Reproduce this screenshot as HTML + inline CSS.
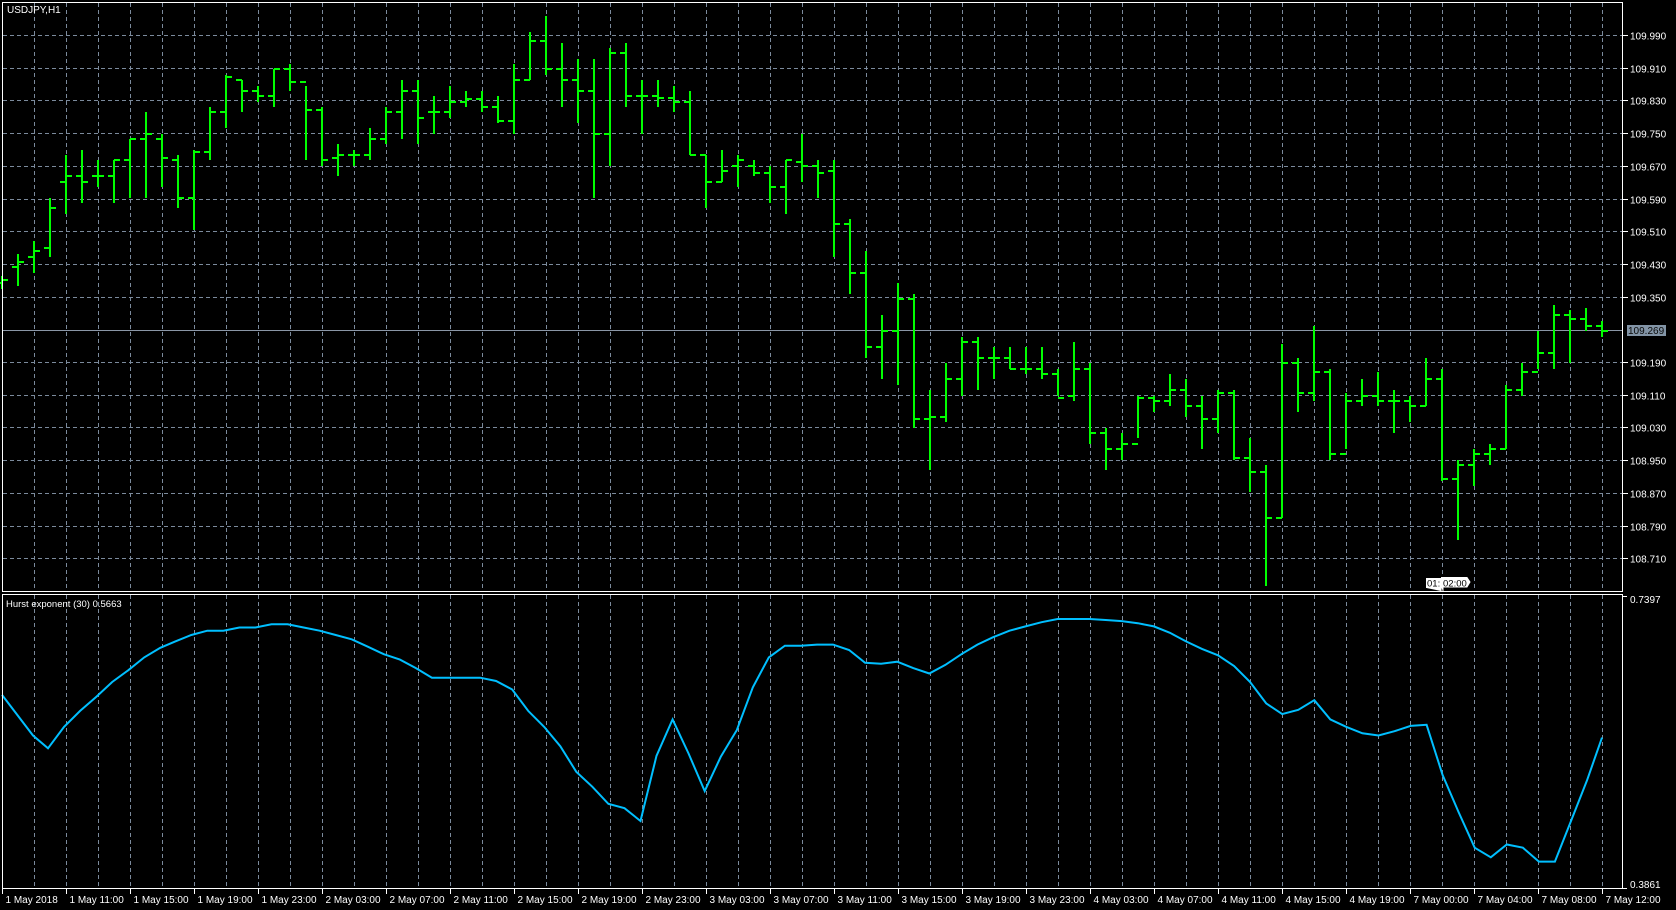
<!DOCTYPE html>
<html><head><meta charset="utf-8"><style>
html,body{margin:0;padding:0;background:#000;width:1676px;height:910px;overflow:hidden}
svg{display:block}
text{font-family:"Liberation Sans",sans-serif;font-size:10px;fill:#fff}
</style></head><body>
<svg id="s" width="1676" height="910" xmlns="http://www.w3.org/2000/svg">
<g id="grid" stroke="#7b8a9c" stroke-width="1" stroke-dasharray="4,3"></g>
<line x1="2" y1="330.5" x2="1623" y2="330.5" stroke="#8a96a6" stroke-width="1"/>
<g id="bars" stroke="#00ff00" stroke-width="2"></g>
<polyline id="hl" fill="none" stroke="#00bfff" stroke-width="2"/>
<rect x="2.5" y="2.5" width="1620" height="589" fill="none" stroke="#fff"/>
<rect x="2.5" y="594.5" width="1620" height="294" fill="none" stroke="#fff"/>
<text x="7" y="13">USDJPY,H1</text>
<text x="6" y="607" style="font-size:9.5px">Hurst exponent (30) 0.5663</text>
<g id="ax"></g>
<rect x="1627" y="325" width="39" height="11" fill="#8294a6"/>
<text x="1628" y="334" style="fill:#0a0a0a">109.269</text>
<path d="M1426.5 588 V578.5 H1441 V591" fill="#fff" stroke="#fff"/>
<path d="M1441.5 588 V577.5 H1467 L1470 582 L1467 587 H1443 V591" fill="#fff" stroke="#fff"/>
<text x="1427" y="586.5" style="fill:#000;font-size:9.5px">01:</text>
<text x="1443" y="586.5" style="fill:#000;font-size:9.5px">02:00</text>
<text x="1630" y="603">0.7397</text>
<line x1="1623" y1="596.5" x2="1627" y2="596.5" stroke="#fff"/>
<text x="1630" y="888">0.3861</text>
<line x1="1623" y1="888.5" x2="1627" y2="888.5" stroke="#fff"/>
</svg>
<script>
var NS="http://www.w3.org/2000/svg",g=document.getElementById('grid'),ax=document.getElementById('ax'),bars=document.getElementById('bars');
function el(p,t,a,txt){var e=document.createElementNS(NS,t);for(var k in a)e.setAttribute(k,a[k]);if(txt)e.textContent=txt;p.appendChild(e);return e;}
for(var x=34;x<1623;x+=32){el(g,'line',{x1:x+.5,y1:3,x2:x+.5,y2:591});el(g,'line',{x1:x+.5,y1:595,x2:x+.5,y2:888});}
var pr=['109.990','109.910','109.830','109.750','109.670','109.590','109.510','109.430','109.350','109.270','109.190','109.110','109.030','108.950','108.870','108.790','108.710'];
for(var i=0;i<pr.length;i++){var y=Math.round(35+i*32.7)+.5;if(i!=9){el(g,'line',{x1:3,y1:y,x2:1622,y2:y});}
 if(i==9)continue;el(ax,'line',{x1:1623,y1:y,x2:1628,y2:y,stroke:'#fff'});el(ax,'text',{x:1630,y:y+4},pr[i]);}
var tl=['1 May 2018','1 May 11:00','1 May 15:00','1 May 19:00','1 May 23:00','2 May 03:00','2 May 07:00','2 May 11:00','2 May 15:00','2 May 19:00','2 May 23:00','3 May 03:00','3 May 07:00','3 May 11:00','3 May 15:00','3 May 19:00','3 May 23:00','4 May 03:00','4 May 07:00','4 May 11:00','4 May 15:00','4 May 19:00','7 May 00:00','7 May 04:00','7 May 08:00','7 May 12:00'];
for(var i=0;i<tl.length;i++){var x=2+64*i+.5;el(ax,'line',{x1:x,y1:889,x2:x,y2:894,stroke:'#fff'});el(ax,'text',{x:x+3,y:903},tl[i]);}
var d=[[258,270,265,262],[238,268,250,245],[225,255,240,235],[185,240,232,195],[145,200,170,165],[140,190,165,170],[150,175,165,165],[150,190,165,150],[130,185,150,130],[105,185,130,125],[125,175,130,148],[145,195,150,185],[140,215,185,142],[100,150,142,105],[70,120,105,72],[75,105,75,85],[80,95,85,90],[65,100,90,65],[60,85,65,77],[80,150,77,103],[100,155,103,150],[135,165,148,145],[140,155,145,145],[120,150,145,130],[100,135,130,105],[75,130,105,85],[75,135,85,110],[90,125,105,105],[80,110,105,95],[85,100,95,93],[85,105,93,100],[90,115,100,113],[60,125,113,75],[30,75,75,38],[15,70,38,65],[40,100,65,75],[55,115,75,85],[55,185,85,125],[45,155,125,50],[40,100,50,90],[75,125,90,90],[75,100,90,92],[80,105,92,95],[85,145,95,145],[145,195,145,170],[140,170,170,160],[145,175,155,150],[150,165,155,162],[155,190,162,175],[150,200,175,150],[125,170,152,155],[150,185,155,162],[150,240,160,210],[205,275,210,255],[235,335,255,325],[295,355,325,310],[265,360,310,280],[275,400,280,392],[365,440,392,390],[340,395,390,355],[315,370,355,320],[315,365,320,335],[325,355,335,335],[325,345,335,345],[325,350,345,345],[325,355,345,350],[345,370,350,372],[320,375,370,345],[340,415,345,405],[400,440,405,420],[405,430,420,415],[370,410,415,372],[370,385,372,375],[350,380,375,365],[355,390,365,380],[370,420,380,392],[365,405,392,368],[365,430,368,428],[410,460,428,442],[435,548,442,485],[322,485,485,340],[335,385,340,368],[305,375,368,348],[345,430,348,425],[368,420,425,375],[355,380,375,370],[348,380,370,375],[365,405,375,375],[370,395,375,380],[335,380,380,355],[345,450,355,448],[430,505,448,435],[420,455,435,425],[415,435,425,420],[360,420,420,365],[340,370,365,348],[310,345,348,330],[285,345,330,295],[290,340,295,298],[288,310,298,305],[300,315,305,310]];
var k=1.069;
for(var i=0;i<d.length;i++){var x=2+16*i,b=d[i];var h=Math.round(b[0]*k),l=Math.round(b[1]*k),o=Math.round(b[2]*k),c=Math.round(b[3]*k);
 el(bars,'line',{x1:x,y1:h,x2:x,y2:l});el(bars,'line',{x1:x-6,y1:o,x2:x,y2:o});el(bars,'line',{x1:x,y1:c,x2:x+6,y2:c});}
var pts=[[4,650],[33,688],[47,700],[62,680],[77,665],[92,652],[107,638],[122,627],[137,615],[152,606],[166,600],[181,594],[196,590],[211,590],[226,587],[241,587],[256,584],[271,584],[286,587],[301,590],[316,594],[331,598],[346,605],[361,612],[376,617],[391,625],[406,634],[421,634],[436,634],[451,634],[466,637],[481,645],[496,665],[511,680],[526,698],[541,722],[556,736],[571,752],[586,756],[601,768],[616,707],[631,673],[646,705],[661,740],[676,708],[691,683],[706,643],[721,615],[736,604],[751,604],[766,603],[781,603],[796,608],[811,620],[826,621],[841,619],[856,625],[871,630],[886,622],[901,612],[916,603],[931,596],[946,590],[961,586],[976,582],[991,579],[1006,579],[1021,579],[1036,580],[1051,581],[1066,583],[1081,586],[1096,592],[1111,600],[1126,607],[1141,613],[1156,623],[1171,638],[1186,658],[1201,668],[1216,664],[1231,655],[1246,673],[1261,680],[1276,686],[1291,688],[1306,684],[1321,679],[1336,678],[1351,725],[1366,760],[1381,793],[1396,802],[1411,790],[1426,793],[1441,806],[1456,806],[1471,768],[1486,730],[1500,690]];
var s='';for(var i=0;i<pts.length;i++){var x=2+(pts[i][0]-4)/14.96*16;s+=x.toFixed(1)+','+(pts[i][1]*k).toFixed(1)+' ';}
document.getElementById('hl').setAttribute('points',s);
</script>
</body></html>
